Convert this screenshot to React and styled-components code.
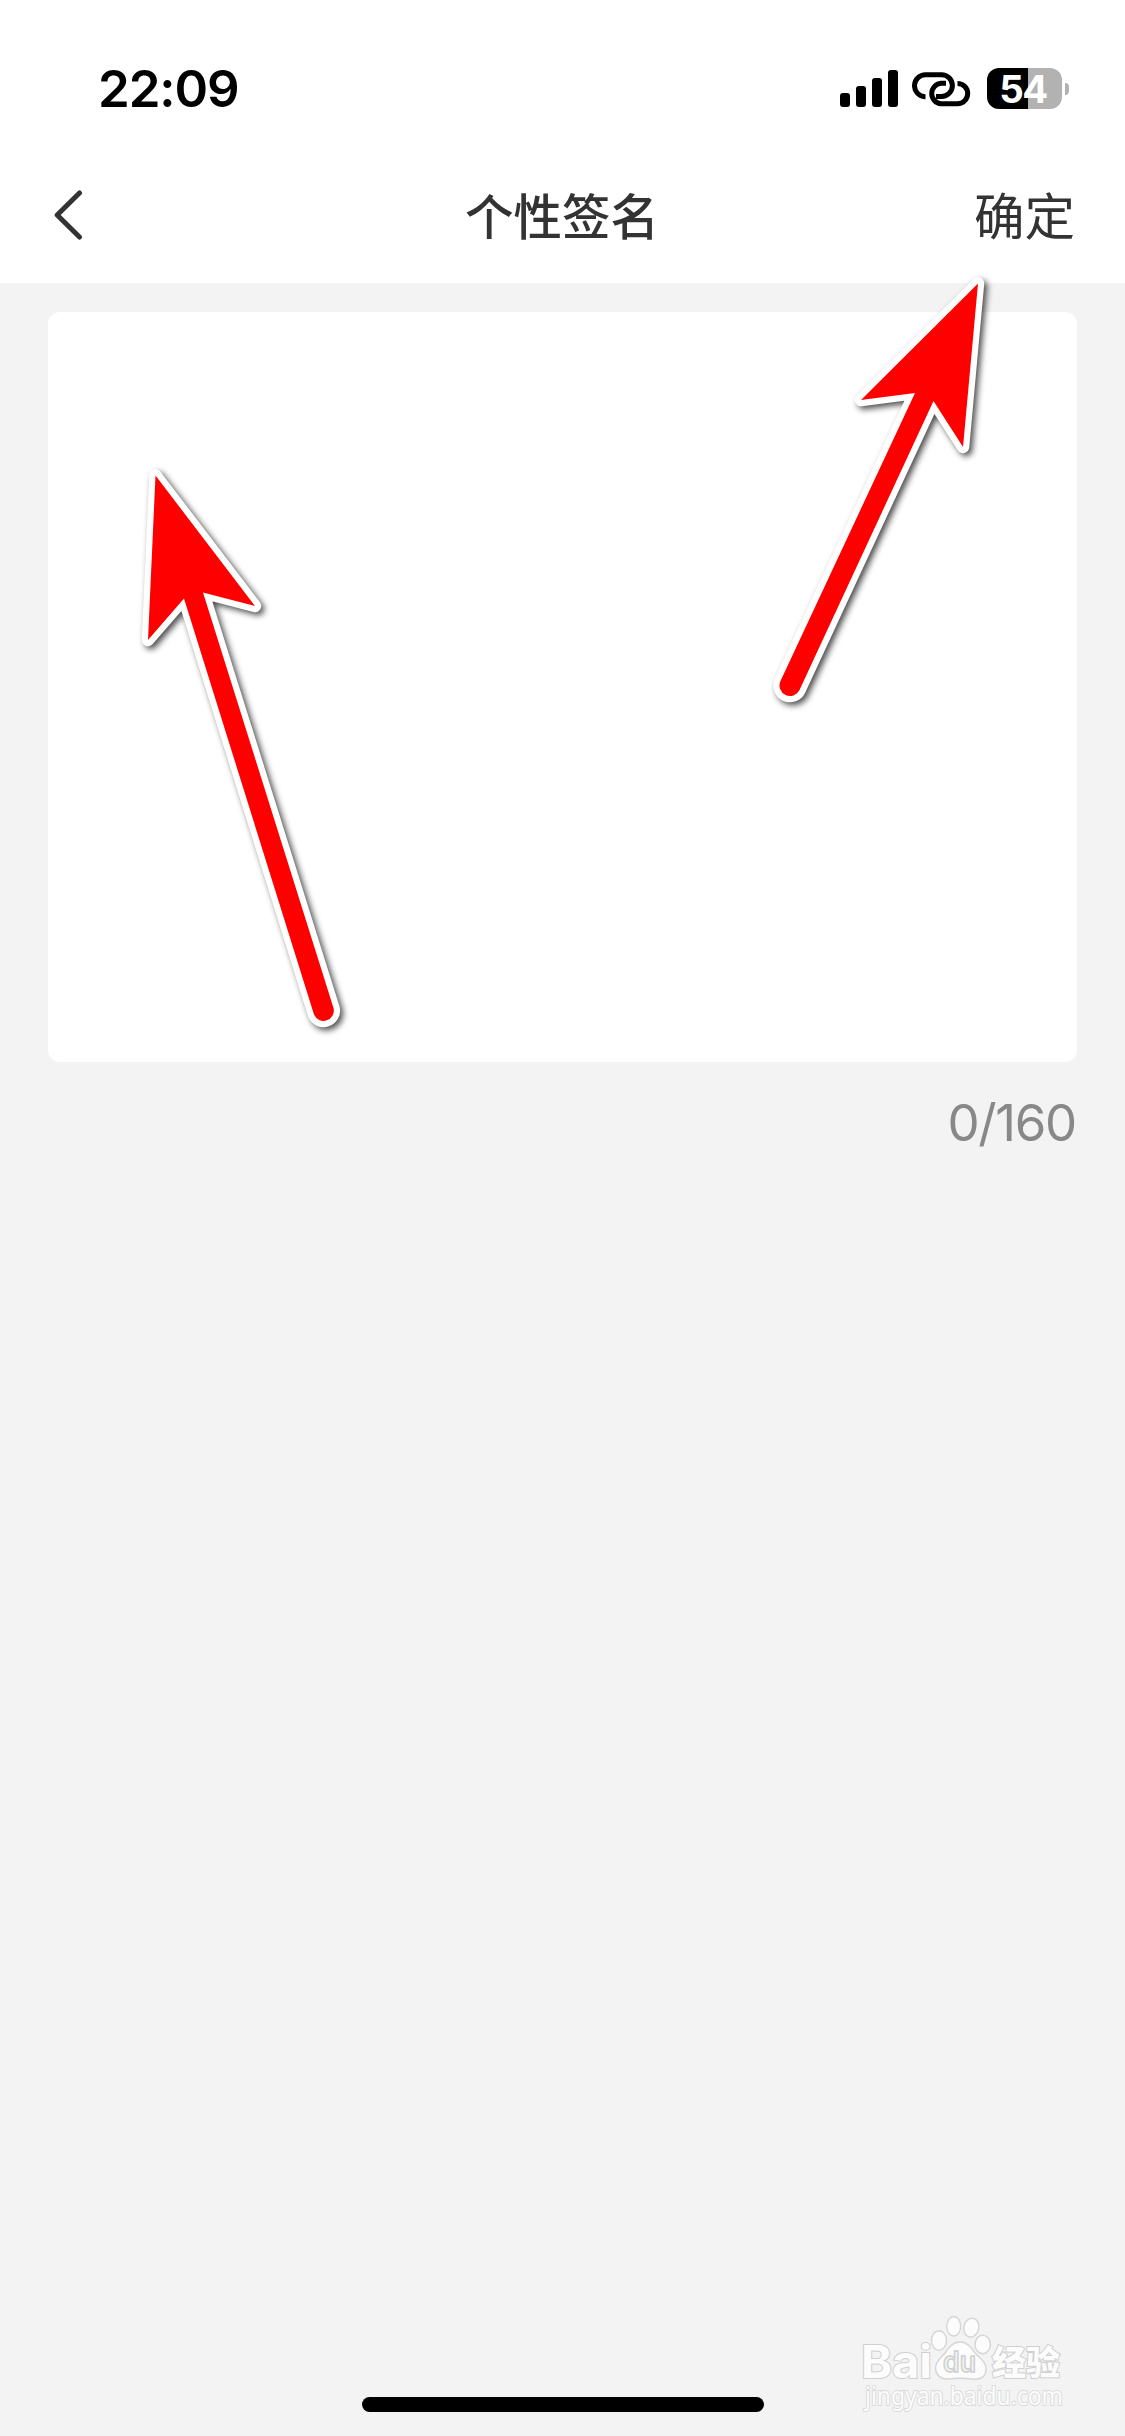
import React from 'react'

import styled, { createGlobalStyle } from 'styled-components'

const arrows = [
  'M155.5 475.5 L255 606 L203 592.5 L333.5 1008 A10.3 10.3 0 0 1 314 1014.5 L184 598.5 L148 640 Z',
  'M978 283.5 L963 447 L933.5 401 L799.5 690 A10.3 10.3 0 0 1 780.5 681 L915 393 L861 400 Z'
]

const App = () => {
  return (
    <Screen>
      <GlobalStyle />
      <StatusBar>
        <Time>22:09</Time>
        <StatusIcons>
          <Signal>
            <Bar $height={14} />
            <Bar $height={21} />
            <Bar $height={29} />
            <Bar $height={37} />
          </Signal>
          <LinkIcon />
          <Battery>
            <BatteryLevel>54</BatteryLevel>
            <BatteryTip />
          </Battery>
        </StatusIcons>
      </StatusBar>
      <Header>
        <BackButton>
          <svg width="30" height="54" viewBox="0 0 30 54" fill="none" stroke="#333" strokeWidth="5" strokeLinecap="round" strokeLinejoin="round">
            <path d="M25.5 5 L3.2 27 L25.5 49" />
          </svg>
        </BackButton>
        <Title>个性签名</Title>
        <Confirm>确定</Confirm>
      </Header>
      <Content>
        <SignatureBox />
        <Counter>0/160</Counter>
      </Content>
      <Arrows />
      <Watermark />
      <HomeIndicator />
    </Screen>
  )
}

export default App

const LinkIcon = () => (
  <LinkSvg viewBox="0 0 60 36" fill="none" stroke="#000" strokeWidth="5" strokeLinecap="butt">
    <path d="M13.5 25.7 H13 A11 11 0 0 1 14 3.7 H29.5 A10.9 10.9 0 0 1 29.5 25.5 H24" />
    <path d="M34 12.3 H29 A10.3 10.3 0 0 0 29 32.8 H45.5 A10.2 10.2 0 0 0 45.5 12.4" />
  </LinkSvg>
)

const Arrows = () => (
  <Overlay viewBox="0 0 1125 2436">
    {arrows.map((d) => (
      <ArrowPath key={d} d={d} />
    ))}
  </Overlay>
)

const Watermark = () => (
  <WatermarkSvg viewBox="0 0 220 126">
    <MarkText x="11" y="68" fontSize="45" textLength="71" lengthAdjust="spacingAndGlyphs" $logo>Bai</MarkText>
    <MarkShape>
      <ellipse cx="89" cy="30.5" rx="7.5" ry="9.7" />
      <ellipse cx="103.7" cy="16.3" rx="7" ry="9.8" />
      <ellipse cx="121.3" cy="17.6" rx="7.5" ry="9.5" transform="rotate(12 121.3 17.6)" />
      <ellipse cx="132.7" cy="34.5" rx="7.7" ry="9.2" />
      <path d="M110 32 C117 32 121 37 125 43 C129 48 136 51 136 59 C136 68 129 70 122 69 C114 68 106 68 99 69 C91 69.5 85.5 65 85.5 58 C85.5 51 91 48 95 43 C99 37 103 32 110 32 Z" />
    </MarkShape>
    <DuText x="93" y="62" fontSize="28" textLength="33" lengthAdjust="spacingAndGlyphs">du</DuText>
    <MarkText x="142" y="65" fontSize="34" textLength="68" lengthAdjust="spacingAndGlyphs" $bold>经验</MarkText>
    <MarkText x="15" y="95" fontSize="25" textLength="198" lengthAdjust="spacingAndGlyphs">jingyan.baidu.com</MarkText>
  </WatermarkSvg>
)

const GlobalStyle = createGlobalStyle`
  * {
    box-sizing: border-box;
  }
  body {
    margin: 0;
    background-color: #f3f3f3;
  }
`
const Screen = styled.div`
  position: relative;
  width: 1125px;
  height: 2436px;
  overflow: hidden;
  background-color: #f3f3f3;
  font-family: Inter, "Noto Sans CJK SC", sans-serif;
`
const StatusBar = styled.div`
  display: flex;
  justify-content: space-between;
  height: 150px;
  padding: 68px 56px 0 98px;
  background-color: white;
`
const Time = styled.div`
  height: 41px;
  line-height: 42px;
  font-size: 51px;
  font-weight: 600;
  letter-spacing: -1.1px;
  color: black;
`
const StatusIcons = styled.div`
  display: flex;
  height: 41px;
`
const Signal = styled.div`
  display: flex;
  align-items: flex-end;
  gap: 6px;
  height: 39px;
  margin-right: 14px;
`
const Bar = styled.div`
  width: 10px;
  height: ${({ $height }) => $height}px;
  border-radius: 3px;
  background-color: black;
`
const LinkSvg = styled.svg`
  width: 60px;
  height: 36px;
  margin: 3px 15px 0 0;
`
const Battery = styled.div`
  display: flex;
  align-items: center;
  gap: 3px;
`
const BatteryLevel = styled.div`
  width: 75px;
  height: 41px;
  padding-right: 3px;
  border-radius: 12px;
  background: linear-gradient(to right, #000 41px, #b2b2b2 41px);
  color: white;
  font-size: 38.5px;
  font-weight: 700;
  letter-spacing: -1.5px;
  line-height: 42px;
  text-align: center;
`
const BatteryTip = styled.div`
  width: 4px;
  height: 12px;
  border-radius: 0 4px 4px 0;
  background-color: #b2b2b2;
`
const Header = styled.div`
  display: grid;
  grid-template-columns: 1fr auto 1fr;
  align-items: center;
  height: 133px;
  padding: 0 51px 0 50px;
  background-color: white;
  color: #333;
`
const BackButton = styled.div`
  display: flex;
  margin: -3px 0 0 4px;
`
const Title = styled.div`
  margin-top: 3px;
  font-size: 48.5px;
  font-weight: 500;
  line-height: 60px;
`
const Confirm = styled.div`
  justify-self: end;
  margin-right: -1px;
  font-size: 50.5px;
  line-height: 60px;
`
const Content = styled.div`
  padding: 29px 48px 0;
`
const SignatureBox = styled.div`
  height: 750px;
  border-radius: 12px;
  background-color: white;
`
const Counter = styled.div`
  margin-top: 30px;
  padding-right: 1px;
  color: #888;
  font-size: 51px;
  letter-spacing: -1.3px;
  line-height: 62px;
  text-align: right;
`
const Overlay = styled.svg`
  position: absolute;
  top: 0;
  left: 0;
  width: 1125px;
  height: 2436px;
`
const ArrowPath = styled.path`
  fill: red;
  stroke: white;
  stroke-width: 12.5px;
  stroke-linejoin: round;
  paint-order: stroke;
  filter: drop-shadow(3px 3px 3px rgba(0, 0, 0, 0.7));
`
const WatermarkSvg = styled.svg`
  position: absolute;
  left: 850px;
  top: 2310px;
  width: 220px;
  height: 126px;
`
const MarkText = styled.text`
  fill: #fcfcfc;
  stroke: ${({ $bold, $logo }) => ($bold || $logo ? '#cfcfcf' : '#dadada')};
  stroke-width: 2px;
  paint-order: stroke;
  font-family: ${({ $logo }) => ($logo ? 'Inter' : '"Noto Sans"')}, "Noto Sans CJK SC", sans-serif;
  font-weight: ${({ $bold, $logo }) => ($bold ? 900 : $logo ? 700 : 400)};
`
const MarkShape = styled.g`
  fill: #fcfcfc;
  stroke: #d6d6d6;
  stroke-width: 1.5px;
`
const DuText = styled.text`
  fill: #f3f3f3;
  stroke: #cfcfcf;
  stroke-width: 1.5px;
  font-family: Inter, sans-serif;
  font-weight: 600;
`
const HomeIndicator = styled.div`
  position: absolute;
  left: 362px;
  bottom: 24px;
  width: 402px;
  height: 15px;
  border-radius: 8px;
  background-color: black;
`
